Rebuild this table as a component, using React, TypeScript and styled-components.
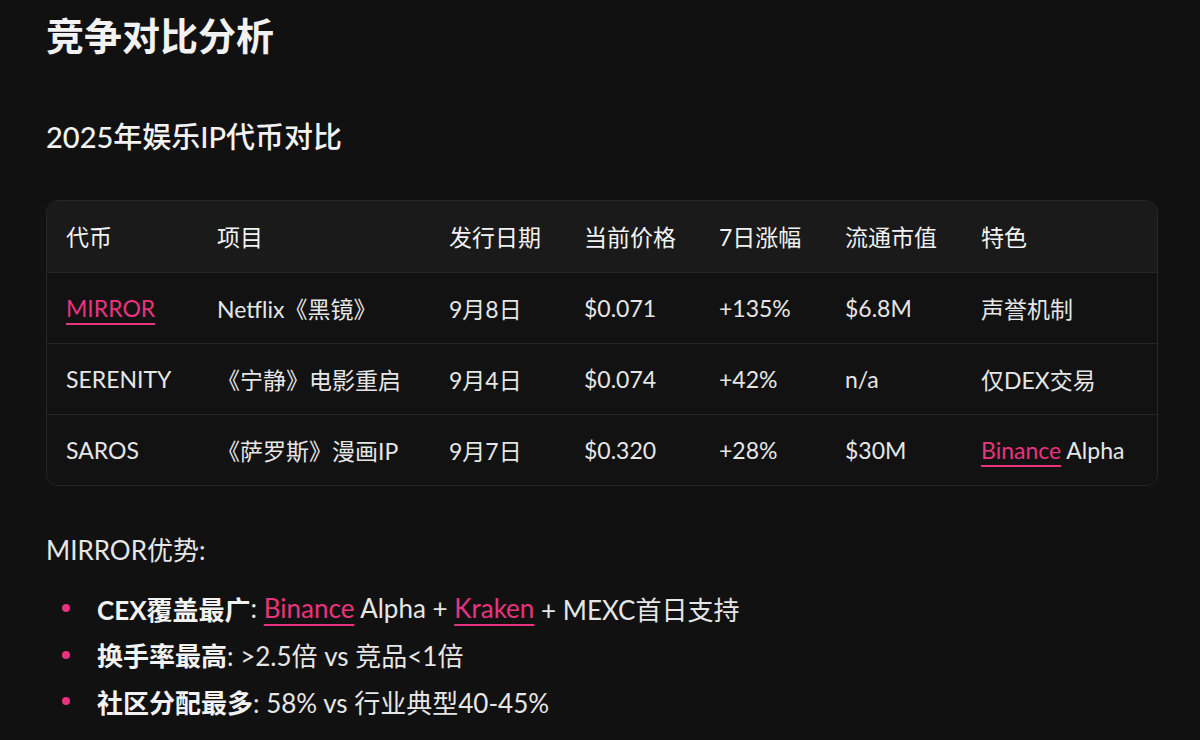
import React from 'react';
import styled, { createGlobalStyle } from 'styled-components';

const colors = {
    page: '#111111',
    headerBg: '#1a1a1a',
    rowBg: '#121212',
    border: '#262626',
    text: '#e6e6e6',
    heading: '#f2f2f2',
    pink: '#e8347f',
};

const fontStack = `Lato, 'Noto Sans CJK SC', sans-serif`;

const GlobalStyle = createGlobalStyle`
    html, body {
        margin: 0;
        padding: 0;
        background: ${colors.page};
    }
    body {
        font-family: ${fontStack};
        color: ${colors.text};
    }
`;

const Page = styled.div`
    width: 1200px;
    height: 740px;
    box-sizing: border-box;
    padding: 14px 44px 0 46px;
    overflow: hidden;
    background: ${colors.page};
`;

const Title = styled.h1`
    margin: 0;
    font-size: 38px;
    line-height: 43px;
    font-weight: 700;
    color: ${colors.heading};
`;

const Subtitle = styled.h2`
    margin: 60px 0 0;
    font-size: 29px;
    line-height: 39px;
    font-weight: 500;
    color: ${colors.heading};
`;

const TableWrap = styled.div`
    margin-top: 44px;
    width: 1110px;
    border: 1px solid ${colors.border};
    border-radius: 12px;
    overflow: hidden;
`;

const Table = styled.table`
    width: 100%;
    border-collapse: collapse;
    table-layout: fixed;
    font-size: 23px;
`;

const HeadCell = styled.th<{ $w?: number }>`
    box-sizing: border-box;
    width: ${p => (p.$w ? `${p.$w}px` : 'auto')};
    height: 71px;
    padding: 0 0 0 19px;
    text-align: left;
    font-weight: 400;
    color: ${colors.heading};
    background: ${colors.headerBg};
`;

const Row = styled.tr`
    background: ${colors.rowBg};
    border-top: 1px solid ${colors.border};
`;

const Cell = styled.td`
    box-sizing: border-box;
    height: 71px;
    padding: 0 0 0 19px;
    color: ${colors.text};
    white-space: nowrap;
`;

const Link = styled.a`
    color: ${colors.pink};
    text-decoration: underline;
    text-decoration-thickness: 2px;
    text-underline-offset: 6px;
`;

const Lead = styled.p`
    margin: 47px 0 0;
    font-size: 26px;
    line-height: 35px;
    color: ${colors.text};
`;

const List = styled.ul`
    margin: 17px 0 0;
    padding: 0;
    list-style: none;
`;

const Item = styled.li`
    display: flex;
    align-items: center;
    height: 46.5px;
    font-size: 26px;
    color: ${colors.text};
    white-space: pre;

    &:before {
        content: '';
        width: 8px;
        height: 8px;
        border-radius: 50%;
        background: ${colors.pink};
        margin: 0 27px 0 16px;
        flex-shrink: 0;
    }
`;

const Strong = styled.strong`
    font-weight: 700;
    color: ${colors.heading};
`;

const columns = [
    { label: '代币', w: 151 },
    { label: '项目', w: 232 },
    { label: '发行日期', w: 135 },
    { label: '当前价格', w: 135 },
    { label: '7日涨幅', w: 126 },
    { label: '流通市值', w: 136 },
    { label: '特色' },
];

export default function App() {
    return (
        <>
            <GlobalStyle />
            <Page>
                <Title>竞争对比分析</Title>
                <Subtitle>2025年娱乐IP代币对比</Subtitle>
                <TableWrap>
                    <Table>
                        <thead>
                            <tr>
                                {columns.map(c => (
                                    <HeadCell key={c.label} $w={c.w}>
                                        {c.label}
                                    </HeadCell>
                                ))}
                            </tr>
                        </thead>
                        <tbody>
                            <Row>
                                <Cell>
                                    <Link>MIRROR</Link>
                                </Cell>
                                <Cell>Netflix《黑镜》</Cell>
                                <Cell>9月8日</Cell>
                                <Cell>$0.071</Cell>
                                <Cell>+135%</Cell>
                                <Cell>$6.8M</Cell>
                                <Cell>声誉机制</Cell>
                            </Row>
                            <Row>
                                <Cell>SERENITY</Cell>
                                <Cell>《宁静》电影重启</Cell>
                                <Cell>9月4日</Cell>
                                <Cell>$0.074</Cell>
                                <Cell>+42%</Cell>
                                <Cell>n/a</Cell>
                                <Cell>仅DEX交易</Cell>
                            </Row>
                            <Row>
                                <Cell>SAROS</Cell>
                                <Cell>《萨罗斯》漫画IP</Cell>
                                <Cell>9月7日</Cell>
                                <Cell>$0.320</Cell>
                                <Cell>+28%</Cell>
                                <Cell>$30M</Cell>
                                <Cell>
                                    <Link>Binance</Link> Alpha
                                </Cell>
                            </Row>
                        </tbody>
                    </Table>
                </TableWrap>
                <Lead>MIRROR优势:</Lead>
                <List>
                    <Item>
                        <Strong>CEX覆盖最广</Strong>: <Link>Binance</Link> Alpha + <Link>Kraken</Link> + MEXC首日支持
                    </Item>
                    <Item>
                        <Strong>换手率最高</Strong>: &gt;2.5倍 vs 竞品&lt;1倍
                    </Item>
                    <Item>
                        <Strong>社区分配最多</Strong>: 58% vs 行业典型40-45%
                    </Item>
                </List>
            </Page>
        </>
    );
}
